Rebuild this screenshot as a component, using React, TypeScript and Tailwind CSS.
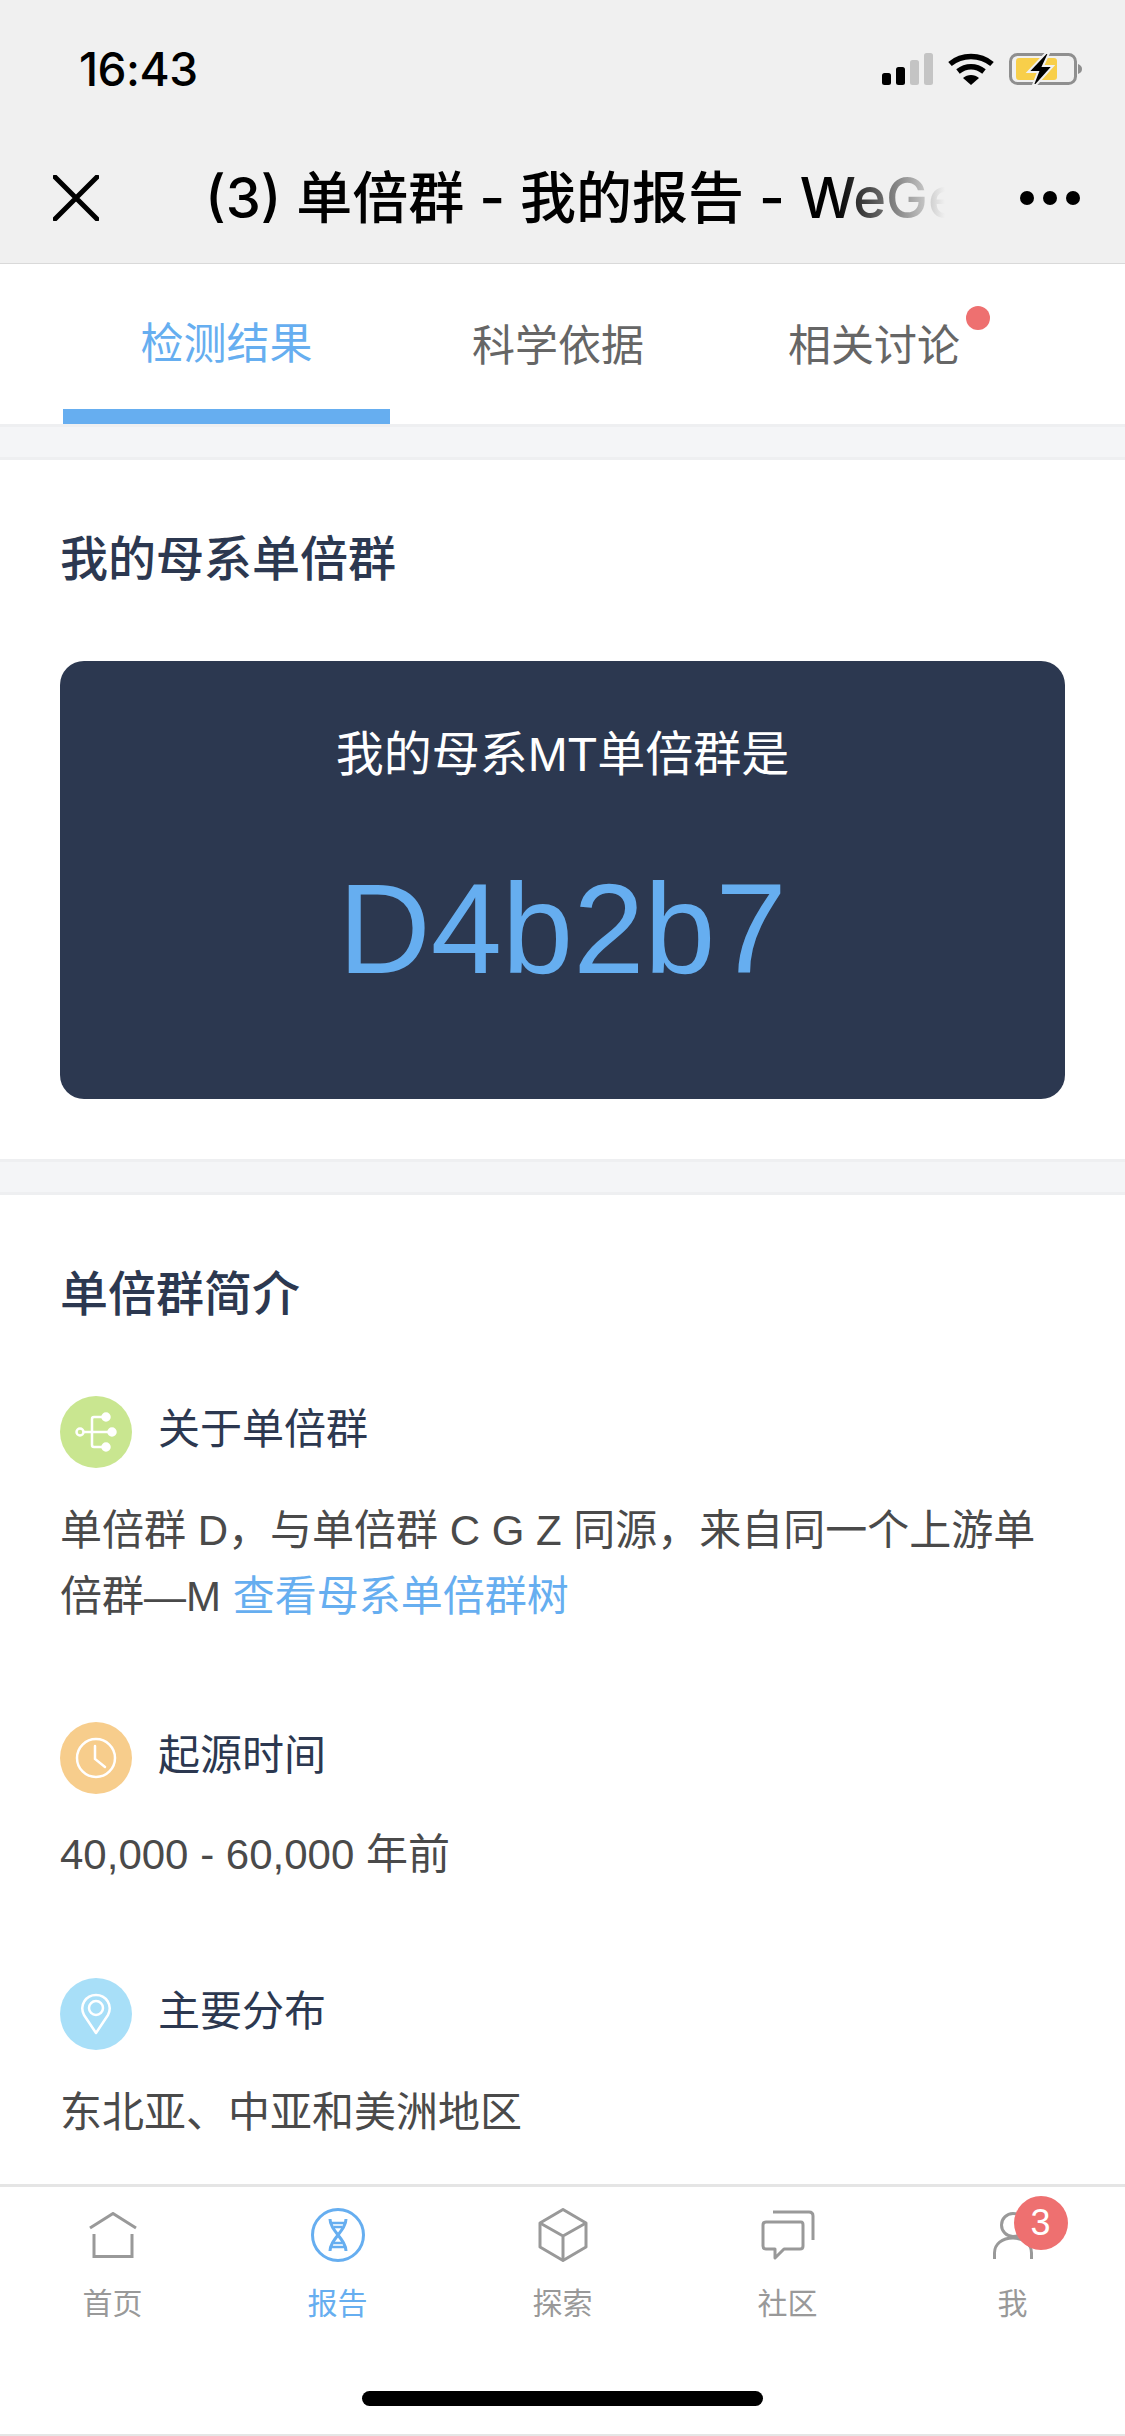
const sans = "font-['Liberation_Sans','Noto_Sans_CJK_SC',sans-serif]"

function StatusIcons() {
  return (
    <div className="flex items-center mr-[43px]">
      <svg width="51" height="32" viewBox="0 0 51 32">
        <rect x="0" y="20" width="9" height="12" rx="2.5" fill="#000" />
        <rect x="14" y="14" width="9" height="18" rx="2.5" fill="#000" />
        <rect x="28" y="7" width="9" height="25" rx="2.5" fill="#c4c4c4" />
        <rect x="42" y="0" width="9" height="32" rx="2.5" fill="#c4c4c4" />
      </svg>
      <svg className="ml-[15px]" width="46" height="32" viewBox="0 0 46 32">
        <path d="M2 11 C14 1 32 1 44 11" fill="none" stroke="#000" strokeWidth="5.5" />
        <path d="M10 18.5 C18 12 28 12 36 18.5" fill="none" stroke="#000" strokeWidth="5.5" />
        <path d="M15 25 C19.5 21 26.5 21 31 25 L23 32 Z" fill="#000" />
      </svg>
      <svg className="ml-[15px]" width="73" height="34" viewBox="0 0 73 34">
        <rect x="1.5" y="2.5" width="65" height="29" rx="7" fill="none" stroke="#8f8f8f" strokeWidth="3" />
        <rect x="7" y="6" width="41" height="22" rx="3" fill="#f8cf4a" />
        <path d="M69 12 C72 13 73 15 73 17 C73 19 72 21 69 22 Z" fill="#8f8f8f" />
        <path d="M37 1 L19 20 H29 L24 33 L27 33 L44 14 H34 L40 1 Z" fill="#000" stroke="#f0f0f0" strokeWidth="2" />
      </svg>
    </div>
  )
}

function Header() {
  return (
    <div className="h-[264px] shrink-0 bg-[#f0f0f0] border-b border-[#d9d9d9]">
      <div className="h-[138px] flex items-center justify-between">
        <span className="ml-[79px] text-[46px] font-medium text-black font-['Inter',sans-serif] tracking-[-0.5px]">16:43</span>
        <StatusIcons />
      </div>
      <div className="h-[120px] flex items-center">
        <svg className="ml-[53px] shrink-0" width="46" height="46" viewBox="0 0 46 46">
          <path d="M2 2 L44 44 M44 2 L2 44" stroke="#000" strokeWidth="5" strokeLinecap="round" />
        </svg>
        <div className="relative ml-[106px] w-[740px] overflow-hidden whitespace-nowrap text-[56px] leading-[70px] font-medium text-black font-['Inter','Noto_Sans_CJK_SC',sans-serif]">
          (3) 单倍群 - 我的报告 - WeGene
          <span className="absolute right-0 top-0 h-full w-[110px] bg-gradient-to-r from-[#f0f0f000] to-[#f0f0f0]" />
        </div>
        <div className="ml-[75px] flex gap-[9px]">
          <span className="w-[14px] h-[14px] rounded-full bg-black" />
          <span className="w-[14px] h-[14px] rounded-full bg-black" />
          <span className="w-[14px] h-[14px] rounded-full bg-black" />
        </div>
      </div>
    </div>
  )
}

function Tabs() {
  return (
    <div className={`h-[160px] shrink-0 bg-white flex pl-[63px] text-[43px] text-[#666] ${sans}`}>
      <div className="w-[327px] flex flex-col items-center border-b-[15px] border-[#66aef0] text-[#66aef0]">
        <span className="mt-[48px] leading-[64px]">检测结果</span>
      </div>
      <div className="w-[336px] flex justify-center">
        <span className="mt-[50px] h-[64px] leading-[64px]">科学依据</span>
      </div>
      <div className="w-[296px] flex justify-center">
        <span className="relative mt-[50px] h-[64px] leading-[64px]">
          相关讨论
          <span className="absolute left-[178px] top-[-8px] w-[24px] h-[24px] rounded-full bg-[#ee7070]" />
        </span>
      </div>
    </div>
  )
}

function Band() {
  return <div className="h-[36px] shrink-0 bg-[#f4f5f7] border-y-[3px] border-[#eeeff1]" />
}

function Heading({ children }: { children: React.ReactNode }) {
  return <h2 className={`ml-[60px] mt-[70px] h-[60px] leading-[60px] text-[48px] font-medium text-[#2c3850] ${sans}`}>{children}</h2>
}

function InfoTitle({ color, label, children, className }: { color: string; label: string; children: React.ReactNode; className: string }) {
  return (
    <div className={`flex items-center ml-[60px] ${className}`}>
      <div className={`w-[72px] h-[72px] rounded-full flex items-center justify-center ${color}`}>{children}</div>
      <span className={`ml-[26px] pb-[5px] text-[42px] text-[#2c3850] ${sans}`}>{label}</span>
    </div>
  )
}

function TabItem({ label, active, children }: { label: string; active?: boolean; children: React.ReactNode }) {
  return (
    <div className="w-[225px] flex flex-col items-center">
      <div className="h-[54px] flex items-center justify-center">{children}</div>
      <span className={`mt-[22px] text-[30px] leading-[40px] ${active ? 'text-[#66aef0]' : 'text-[#999]'} ${sans}`}>{label}</span>
    </div>
  )
}

function BottomBar() {
  return (
    <div className="mt-auto h-[252px] shrink-0 flex flex-col items-center bg-white border-t-[3px] border-[#e5e5e5] border-b-[2px]">
      <div className="flex pt-[21px]">
        <TabItem label="首页">
          <svg width="48" height="46" viewBox="0 0 48 46" fill="none" stroke="#999" strokeWidth="3">
            <path d="M1 16 L24 1.5 L47 16" />
            <path d="M5 22 V44.5 H43 V22" />
          </svg>
        </TabItem>
        <TabItem label="报告" active>
          <svg width="54" height="54" viewBox="0 0 54 54" fill="none" stroke="#66aef0" strokeWidth="3">
            <circle cx="27" cy="27" r="25.5" />
            <path d="M19 11 C19 23 35 31 35 43 M35 11 C35 23 19 31 19 43" />
            <path d="M19 15 H35 M20 39 H34 M23 19 H31 M23 35 H31" strokeWidth="2.5" />
          </svg>
        </TabItem>
        <TabItem label="探索">
          <svg width="50" height="54" viewBox="0 0 50 54" fill="none" stroke="#999" strokeWidth="3" strokeLinejoin="round">
            <path d="M25 1.5 L48 15 V39 L25 52.5 L2 39 V15 Z" />
            <path d="M2 15 L25 28 L48 15 M25 28 V52.5" />
          </svg>
        </TabItem>
        <TabItem label="社区">
          <svg width="54" height="50" viewBox="0 0 54 50" fill="none" stroke="#999" strokeWidth="3" strokeLinejoin="round">
            <path d="M12 2 H48 Q52 2 52 6 V30" />
            <path d="M5 12 H40 Q42 12 42 15 V36 Q42 39 39 39 H23 L14 48 V39 H5 Q2 39 2 36 V15 Q2 12 5 12 Z" />
          </svg>
        </TabItem>
        <TabItem label="我">
          <div className="relative">
            <svg width="40" height="47" viewBox="0 0 40 47" fill="none" stroke="#999" strokeWidth="3">
              <circle cx="20" cy="13" r="11.5" />
              <path d="M1.5 47 V41 C1.5 32 9 26 20 26 C31 26 38.5 32 38.5 41 V47" />
            </svg>
            <span className="absolute left-[21px] top-[-16px] w-[54px] h-[54px] rounded-full bg-[#ee7070] text-white text-[36px] flex items-center justify-center font-['Liberation_Sans',sans-serif]">3</span>
          </div>
        </TabItem>
      </div>
      <div className="mt-[67px] w-[401px] h-[15px] rounded-full bg-black" />
    </div>
  )
}

export default function App() {
  return (
    <div className="w-[1125px] h-[2436px] flex flex-col bg-white overflow-hidden">
      <Header />
      <Tabs />
      <Band />

      <div className="h-[699px] shrink-0 bg-white">
        <Heading>我的母系单倍群</Heading>
        <div className="mx-[60px] mt-[71px] h-[438px] rounded-[24px] bg-[#2c3850] flex flex-col items-center">
          <p className={`mt-[64px] leading-[60px] text-[48px] text-white ${sans}`}>我的母系MT单倍群是</p>
          <p className={`mt-[74px] leading-[140px] text-[128px] text-[#66aef0] ${sans}`}>D4b2b7</p>
        </div>
      </div>

      <Band />

      <Heading>单倍群简介</Heading>

      <InfoTitle color="bg-[#c9e690]" label="关于单倍群" className="mt-[71px]">
        <svg width="42" height="42" viewBox="0 0 42 42" fill="none" stroke="#fff" strokeWidth="2.5">
          <circle cx="5" cy="21" r="3.5" />
          <path d="M9 21 H34 M17 21 V8 Q17 6 19 6 H27 M17 21 V34 Q17 36 19 36 H27" />
          <circle cx="31" cy="6" r="3.5" fill="#fff" />
          <circle cx="37" cy="21" r="3.5" fill="#fff" />
          <circle cx="31" cy="36" r="3.5" fill="#fff" />
        </svg>
      </InfoTitle>
      <p className={`ml-[60px] mt-[30px] text-[42px] leading-[66px] text-[#4a4a4a] whitespace-nowrap ${sans}`}>
        单倍群 D，与单倍群 C G Z 同源，来自同一个上游单
        <br />
        倍群—M <span className="text-[#66aef0]">查看母系单倍群树</span>
      </p>

      <InfoTitle color="bg-[#f7cd8c]" label="起源时间" className="mt-[92px]">
        <svg width="42" height="42" viewBox="0 0 42 42" fill="none" stroke="#fff" strokeWidth="2.5" strokeLinecap="round">
          <circle cx="21" cy="21" r="19" />
          <path d="M20 9 V22 L30 30" />
        </svg>
      </InfoTitle>
      <p className={`ml-[60px] mt-[28px] text-[42px] leading-[66px] text-[#4a4a4a] ${sans}`}>40,000 - 60,000 年前</p>

      <InfoTitle color="bg-[#a8dff8]" label="主要分布" className="mt-[90px]">
        <svg width="32" height="42" viewBox="0 0 32 42" fill="none" stroke="#fff" strokeWidth="2.5" strokeLinejoin="round">
          <path d="M16 40 L4 22 C-1 12 6 2 16 2 C26 2 33 12 28 22 Z" />
          <circle cx="16" cy="15" r="7" />
        </svg>
      </InfoTitle>
      <p className={`ml-[60px] mt-[30px] text-[42px] leading-[66px] text-[#4a4a4a] ${sans}`}>东北亚、中亚和美洲地区</p>

      <BottomBar />
    </div>
  )
}
